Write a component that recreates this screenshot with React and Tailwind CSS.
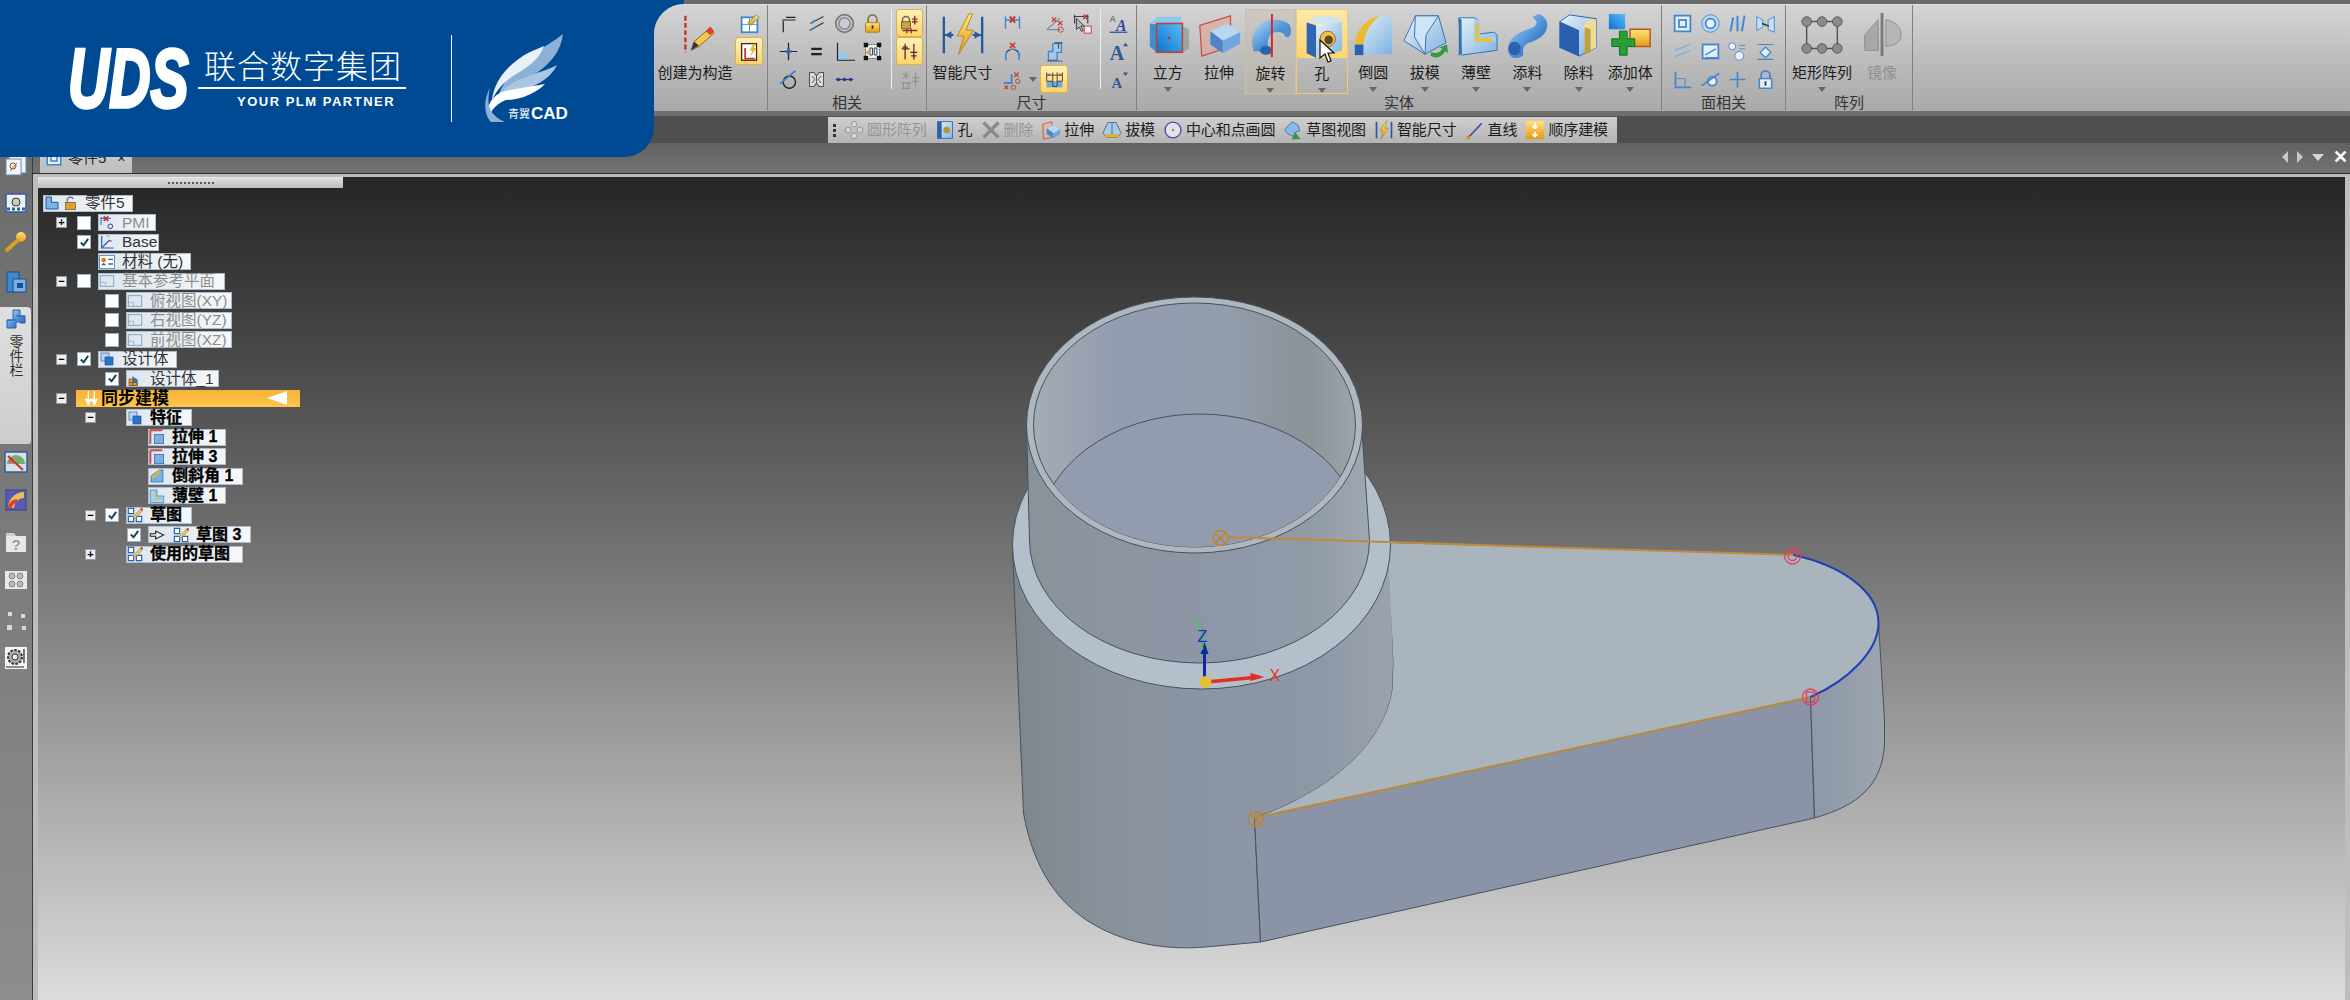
const PLATE = "M1388 543 L1794 555 C1840 565 1879 590 1879 623 C1879 650 1850 680 1811 697 L1255 818 C1330 792 1384 745 1393 690 L1394 663 Z";

function Gradients() {
  return (
    <svg className="absolute h-0 w-0">
      <defs>
        <linearGradient id="gBlue" x1="0" y1="0" x2="1" y2="1"><stop offset="0" stopColor="#bcdcf5" /><stop offset="0.55" stopColor="#4a90d8" /><stop offset="1" stopColor="#1c4fa0" /></linearGradient>
        <linearGradient id="gPale" x1="0" y1="0" x2="1" y2="1"><stop offset="0" stopColor="#e6f2fb" /><stop offset="1" stopColor="#7fb2e0" /></linearGradient>
        <linearGradient id="gCube" x1="0" y1="1" x2="1" y2="0"><stop offset="0" stopColor="#0f6fd0" /><stop offset="1" stopColor="#55c0f5" /></linearGradient>
        <linearGradient id="gGold" x1="0" y1="0" x2="0" y2="1"><stop offset="0" stopColor="#ffe27a" /><stop offset="1" stopColor="#e59a16" /></linearGradient>
        <linearGradient id="gSolid" x1="0" y1="0" x2="1" y2="0"><stop offset="0" stopColor="#7d868c" /><stop offset="0.22" stopColor="#88919a" /><stop offset="0.5" stopColor="#8b94a3" /><stop offset="0.8" stopColor="#8e97a6" /><stop offset="1" stopColor="#9aa3ad" /></linearGradient>
        <linearGradient id="gTube" x1="0" y1="0" x2="1" y2="0"><stop offset="0" stopColor="#8a9299" /><stop offset="0.3" stopColor="#8d95a2" /><stop offset="0.6" stopColor="#8e97a8" /><stop offset="0.85" stopColor="#929ca8" /><stop offset="1" stopColor="#a0a9b2" /></linearGradient>
        <linearGradient id="gInner" x1="0" y1="0" x2="1" y2="0"><stop offset="0" stopColor="#a4acb4" /><stop offset="0.25" stopColor="#939cb0" /><stop offset="0.6" stopColor="#939cac" /><stop offset="0.85" stopColor="#8a9396" /><stop offset="1" stopColor="#9ca4ac" /></linearGradient>
        <linearGradient id="gEnd" x1="0" y1="0" x2="1" y2="0"><stop offset="0" stopColor="#8d97a8" /><stop offset="1" stopColor="#9ca5ae" /></linearGradient>
      </defs>
    </svg>
  );
}

const BIG = {
  construct: <><path d="M14 4V42" stroke="#c8322a" strokeWidth="2.5" strokeDasharray="5 2.5" /><path d="M20 40l3-9 16-14 5 5-16 14z" fill="#f2c94c" stroke="#8a6a20" /><path d="M35 20l5-5 4 5-4 4z" fill="#d8403a" /><path d="M20 40l3-9 5 4z" fill="#333" /></>,
  smart: <><path d="M4 5V43M44 5V43" stroke="#2a5a9c" strokeWidth="2.5" /><path d="M4 24h10M34 24h10" stroke="#2a5a9c" strokeWidth="2" /><path d="M5 24l7-4v8zM43 24l-7-4v8z" fill="#2a5a9c" /><path d="M30 2L18 25h7l-6 20 16-26h-8l7-17z" fill="url(#gGold)" stroke="#b08a20" /></>,
  cube: <><path d="M38 14l8 4v20l-8 5H10z" fill="#7c8a8a" opacity="0.55" /><path d="M5 12l8-7h25l-1 7z" fill="#8ec8ee" /><path d="M5 12v24l7 6V13z" fill="#3f8fd0" /><rect x="12" y="12" width="27" height="30" fill="url(#gCube)" stroke="#c0403a" strokeWidth="1.6" /><circle cx="25" cy="27" r="1.5" fill="#d03030" /></>,
  extrude: <><path d="M4 14L36 4v32L6 46z" fill="#e0a090" fillOpacity="0.5" stroke="#c9503f" strokeWidth="1.3" /><path d="M15 20l18-8 13 9-18 9z" fill="#b7d8f2" /><path d="M15 20l13 10v13l-13-9z" fill="#4c86c4" /><path d="M28 30l18-9v12l-18 10z" fill="#6fa8dc" /></>,
  revolve: <><path d="M7 40C2 26 8 8 28 7c8 0 14 2 17 6l-3 12c-2-4-8-6-13-5-7 2-9 10-6 20z" fill="url(#gBlue)" /><ellipse cx="20" cy="39" rx="6.5" ry="4.5" fill="#2a62ae" /><ellipse cx="42" cy="19" rx="4" ry="6.5" fill="#4f8fd0" /><path d="M26 1V46" stroke="#d02828" strokeWidth="2" /></>,
  hole: <><path d="M8 10l11-7 27 2-11 6z" fill="#cfe4f5" /><path d="M8 10v32l10 5V13z" fill="#2f66b4" /><path d="M18 12l27-3v30l-27 8z" fill="url(#gPale)" /><circle cx="30" cy="27" r="8" fill="#f2c14a" stroke="#8a6a20" /><circle cx="31" cy="28" r="4.5" fill="#5a4a22" /></>,
  round: <><path d="M6 30C8 14 22 4 34 3c8 0 10 3 10 8v33H6z" fill="url(#gPale)" /><path d="M5 34C6 18 18 6 32 3c-8 6-16 16-18 31z" fill="#e8bb35" /><path d="M5 34h9v11H5z" fill="#2a62ae" /></>,
  draft: <><path d="M14 4h24l8 28-22 12L2 30z" fill="url(#gPale)" stroke="#3a70b0" /><path d="M14 4l-1 22 11 18 1-20 13-20z" fill="#cfe4f5" stroke="#3a70b0" /><path d="M30 42c6 2 10 0 12-4l-3-1 8-3 1 9-3-2c-3 6-9 8-15 5z" fill="#2f9a3e" /></>,
  thin: <><path d="M6 6h16l5 3v14l16-2 3 3v16l-37 5z" fill="url(#gPale)" stroke="#3a70b0" /><path d="M22 8h6v18h16v5H22z" fill="#a9cfee" /><path d="M23 12h4v15h14v4H23z" fill="#e4c043" /><path d="M6 6l3 2v35l-3 3z" fill="#3a70b0" /></>,
  add: <><path d="M4 38c0-9 8-15 16-18 7-3 14-4 14-9 0-3-3-3-4-6l6-3c6 2 10 7 9 13-1 10-11 14-19 17-4 2-7 5-6 11 1 3-3 5-8 5-5 0-8-4-8-10z" fill="url(#gBlue)" /><ellipse cx="11" cy="38" rx="6.5" ry="7" fill="#2a62ae" /></>,
  cut: <><path d="M4 10l10-7 28 4v30l-18 9-20-9z" fill="url(#gPale)" stroke="#2a62ae" /><path d="M4 10l20 9v27L4 37z" fill="#2a5eb0" /><path d="M26 14c4 4 4-5 10-7l6 1v29l-6 3V20c-4-1-7-2-10-6z" fill="#f0dc9a" /><path d="M30 16l6 2v24l-6 2z" fill="#c8a030" /></>,
  addBody: <><rect x="2" y="2" width="17" height="16" fill="url(#gCube)" /><rect x="24" y="18" width="21" height="18" fill="url(#gGold)" stroke="#b8541e" strokeWidth="1.5" /><path d="M12 25h8v-8h8v8h8v8h-8v9h-8v-9h-8z" transform="translate(-7 3)" fill="#27a038" stroke="#136a22" /></>,
  rect: <><path d="M8 10H40V38H8z" fill="none" stroke="#555" strokeWidth="1.5" />{[[8, 10], [24, 10], [40, 10], [8, 38], [24, 38], [40, 38]].map(([x, y]) => <circle key={x + "-" + y} cx={x} cy={y} r="5" fill="#8a8a8a" stroke="#555" />)}</>,
  mirror: <><path d="M6 24L20 8v32H6z" fill="#a8a8a8" stroke="#8a8a8a" /><path d="M28 8c10 2 16 8 16 16 0 6-4 10-16 12z" fill="#b6b6b6" stroke="#8f8f8f" /><path d="M24 1V46" stroke="#7a7a7a" strokeWidth="3" /></>,
};

const B = "#3f86cf";
const K = "#222";
const R = "#c8342e";
const SMALL = {
  sketchBox: <><rect x="3" y="5" width="18" height="17" fill="#fff" stroke={B} strokeWidth="2" /><path d="M3 13h18M12 5v17" stroke={B} /><path d="M10 11L20 2l3 3-9 9z" fill="url(#gGold)" stroke="#885" /></>,
  constructHL: <><rect x="3" y="3" width="17" height="19" fill="#fff" stroke="#3a2a1a" strokeWidth="1.5" /><path d="M7 8v12h11" fill="none" stroke="#c8342e" strokeWidth="2" /><path d="M16 3l-4 8h3l-2 7 7-10h-3l2-5z" fill="#e9b92d" /></>,
  corner: <><path d="M6 22V8h14M9 5h11" fill="none" stroke={K} strokeWidth="1.4" /><circle cx="6" cy="8" r="1.4" fill={B} /></>,
  parallel: <><path d="M5 12L20 4M4 20L20 11" stroke="#444" strokeWidth="1.4" /><path d="M8 10l3-2M8 18l3-2" stroke={B} strokeWidth="2" /></>,
  concentric: <><circle cx="12" cy="12" r="10" fill="none" stroke="#777" strokeWidth="2" /><circle cx="12" cy="12" r="6.5" fill="none" stroke="#8a8fa8" strokeWidth="2" /></>,
  lock: <><path d="M7 11V7a5 5 0 0 1 10 0v4" fill="none" stroke="#8a7a50" strokeWidth="2" /><rect x="4" y="11" width="16" height="11" rx="1" fill="url(#gGold)" stroke="#a07a20" /><path d="M12 14v4" stroke="#333" strokeWidth="2" /></>,
  lockHL: <><path d="M4 8a4 4 0 0 1 8 0v3H4z" fill="none" stroke="#666" strokeWidth="1.6" /><rect x="3" y="10" width="10" height="8" fill="#caa63a" stroke="#654" /><path d="M18 3v10M15 7h6M15 10h6M4 20h17M9 18v5M14 18v5" stroke="#8a2a3a" strokeWidth="1.5" /></>,
  doubleHL: <><path d="M7 3v18M17 3v18" stroke="#8a2a3a" strokeWidth="1.6" /><path d="M3 9h9M13 13h8M4 7l6 0M14 17h6" stroke="#333" strokeWidth="1.4" /></>,
  disabled: <><path d="M8 3v9M4 5l8 5M12 5l-8 5M19 4v16M15 10h8M15 14h8M3 16h10M3 22h10M5 15v8M11 15v8" stroke="#8c8c8c" strokeWidth="1.1" /></>,
  cross: <><path d="M12 2v20M2 12h20" stroke={K} strokeWidth="1.4" /><path d="M12 8v8M8 12h8" stroke="#2a5a9c" strokeWidth="2.4" /></>,
  equal: <path d="M6 9h12M6 15h12" stroke={K} strokeWidth="2.8" />,
  perp: <><path d="M4 2v20h20" fill="none" stroke={K} strokeWidth="1.4" /><path d="M5 13h9v8H5z" fill="#8ec6f0" /></>,
  select: <><rect x="4" y="4" width="16" height="16" fill="#e8eef4" stroke="#555" strokeDasharray="2 1" />{[[3, 3], [18, 3], [3, 18], [18, 18]].map(([x, y]) => <rect key={x + "-" + y} x={x - 1} y={y - 1} width="5" height="5" fill="#111" />)}<path d="M9 8h3v8H9zM14 8h3v8h-3z" fill="none" stroke="#234" /><rect x="5" y="11" width="4" height="4" fill="#d8a832" /></>,
  tangent: <><circle cx="13" cy="15" r="7" fill="none" stroke={K} strokeWidth="1.6" /><path d="M2 17L20 2" stroke={B} strokeWidth="2" /></>,
  sym: <><path d="M4 4h5l3 4v8l-3 4H4zM20 4h-5l-3 4v8l3 4h5z" fill="#d8dce4" stroke="#555" strokeWidth="1.2" /><path d="M7 8l3 4-3 4M17 8l-3 4 3 4" fill="none" stroke="#444" /></>,
  collin: <><path d="M2 12h20" stroke="#2a3a8a" strokeWidth="1.5" />{[5, 12, 19].map((x) => <circle key={x} cx={x} cy="12" r="2" fill="#2a3a8a" />)}</>,
  dimX: <><path d="M4 4v14M20 4v14M4 8h16" fill="none" stroke={B} strokeWidth="1.6" /><path d="M9 4l6 7M15 4l-6 7" stroke={R} strokeWidth="2.2" /></>,
  dimAng: <><path d="M3 19L18 6M3 19h16" stroke="#7d8cb0" strokeWidth="1.5" /><path d="M9 5l5 5M14 5l-5 5M16 9l5 5M21 9l-5 5" stroke={R} strokeWidth="1.3" /><circle cx="19" cy="19" r="3" fill="none" stroke={R} /></>,
  dimSel: <><path d="M2 4h17M3 2v10M18 2v10" stroke="#345" strokeWidth="1.3" /><path d="M13 2l4 5M17 2l-4 5" stroke={R} strokeWidth="1.6" /><path d="M5 6v13l3-3 3 5 2-1-3-5h4z" fill="#bbb" stroke="#333" /><rect x="14" y="15" width="8" height="8" fill="#eee" stroke={R} /></>,
  dimArc: <><path d="M5 22C3 16 5 12 9 10M19 22c2-6 0-10-4-12" fill="none" stroke={B} strokeWidth="1.8" /><path d="M5 12l7-3 7 3" fill="none" stroke="#345" /><path d="M9 2l6 6M15 2l-6 6" stroke={R} strokeWidth="2" /></>,
  dimDia: <><path d="M5 22V12h5V3h10v10h-5v9z" fill="#a8c8e8" stroke={B} strokeWidth="1.5" /><path d="M12 2h9M16.5 3v6" stroke="#234" /><path d="M4 23h17" stroke="#234" strokeDasharray="2 1" /></>,
  dimBase: <><path d="M2 16h9V6" fill="none" stroke={B} strokeWidth="2.2" /><path d="M14 4l5 5M19 4l-5 5M3 19l4 4M7 19l-4 4" stroke={R} strokeWidth="1.4" /><circle cx="18" cy="14" r="2.5" fill="none" stroke={R} /><circle cx="13" cy="21" r="2.5" fill="none" stroke={R} /></>,
  dimHL: <><rect x="3" y="14" width="18" height="7" fill="#6ea8dc" /><path d="M3 14V4M21 14V4M10 14V4M15 14V4M3 7h18M3 14h7v6h5v-6h6" fill="none" stroke="#444" strokeWidth="1.1" /><path d="M4 5l3 3M7 5l-3 3M17 5l3 3M20 5l-3 3" stroke={R} /></>,
  textA: <><text x="2" y="10" fontSize="10" fill="#444" fontFamily="Liberation Sans">A</text><text x="9" y="20" fontSize="18" fontWeight="700" fontStyle="italic" fill="#2a4a9c" fontFamily="Liberation Serif">A</text><path d="M2 22h20" stroke="#2a4a9c" strokeWidth="1.4" /></>,
  growA: <><text x="2" y="22" fontSize="23" fontWeight="700" fill="#2f5a96" fontFamily="Liberation Serif">A</text><path d="M17 6l3-4 3 4z" fill="#2f5a96" /></>,
  shrinkA: <><text x="4" y="22" fontSize="17" fontWeight="700" fill="#2f5a96" fontFamily="Liberation Serif">A</text><path d="M17 4h6l-3 4z" fill="#2f5a96" /></>,
  fSquare: <><rect x="3" y="3" width="18" height="18" fill="#e6eef6" stroke={B} strokeWidth="2" /><rect x="8" y="8" width="8" height="8" fill="none" stroke={B} strokeWidth="2" /></>,
  fRing: <><circle cx="12" cy="12" r="10" fill="#b8d6f0" stroke={B} /><circle cx="12" cy="12" r="5.5" fill="#e8f2fa" stroke={B} strokeWidth="2" /></>,
  fBars: <><path d="M4 21L7 5M12 3v18M20 3l-3 18" stroke={B} strokeWidth="2.2" /><path d="M8 12h2M14 12h2" stroke="#9cc4ea" strokeWidth="2" /></>,
  fPlanes: <><path d="M2 4l7 4v8l-7 4zM22 4l-7 4v11l7 3z" fill="#c8def2" stroke={B} /><path d="M8 12l8 3" stroke="#234" strokeWidth="1.6" /></>,
  fPar: <path d="M3 11l17-7M3 18l17-7" stroke="#8ab0d4" strokeWidth="2" />,
  fDist: <><rect x="3" y="4" width="18" height="16" fill="#e6eef6" stroke={B} strokeWidth="2" /><path d="M6 16l12-7M6 19h16" stroke={B} strokeWidth="1.6" /></>,
  fPts: <><circle cx="6" cy="6" r="4" fill="#eaf2fa" stroke={B} /><circle cx="14" cy="17" r="5" fill="#eaf2fa" stroke={B} /><path d="M14 5h7M14 9h7" stroke={B} /></>,
  fDia: <><path d="M3 4h18M3 21h18" stroke={B} strokeWidth="1.4" /><path d="M12 7l6 6-6 6-6-6z" fill="#e6eef6" stroke={B} strokeWidth="1.6" /></>,
  fBase: <><path d="M4 3v18h18" fill="none" stroke={B} strokeWidth="2" /><path d="M6 11h9v9" fill="none" stroke={B} /></>,
  fTan: <><circle cx="14" cy="14" r="5" fill="#eaf2fa" stroke={B} strokeWidth="2" /><path d="M2 19L22 5" stroke={B} strokeWidth="2" /></>,
  fPlus: <path d="M12 3v18M3 12h18" stroke={B} strokeWidth="1.8" />,
  fLock: <><path d="M7 11V7a5 5 0 0 1 10 0v4" fill="none" stroke={B} strokeWidth="2" /><rect x="5" y="11" width="14" height="11" fill="#e6eef6" stroke={B} strokeWidth="1.6" /><path d="M12 14v5" stroke="#234" strokeWidth="2" /></>,
  qCircPat: <><g fill="#d4d4d4" stroke="#8e8e8e"><circle cx="12" cy="5" r="3.5" /><circle cx="5" cy="12" r="3.5" /><circle cx="19" cy="12" r="3.5" /><circle cx="12" cy="19" r="3.5" /></g></>,
  qHole: <><rect x="3" y="2" width="18" height="20" fill="url(#gPale)" stroke="#2a62ae" /><rect x="3" y="2" width="5" height="20" fill="#2a62ae" /><circle cx="14" cy="12" r="4" fill="#b8942f" /></>,
  qDelete: <path d="M3 3l18 18M21 3L3 21" stroke="#8a8a8a" strokeWidth="4" />,
  qExtrude: <><path d="M2 5l11-3v19L3 23z" fill="#e4b0a0" fillOpacity="0.5" stroke="#c9503f" /><path d="M7 10l8-4 8 5-8 5z" fill="#b7d8f2" /><path d="M7 10l8 6v6l-8-5z" fill="#4c86c4" /><path d="M15 16l8-5v6l-8 5z" fill="#6fa8dc" /></>,
  qDraft: <><path d="M7 3h10l6 13-5 5H6l-5-5z" fill="#a8c8e4" stroke="#44658a" /><path d="M12 3v18" stroke="#44658a" /><path d="M4 17h16v4H4z" fill="#e0b030" /></>,
  qCircle: <><circle cx="12" cy="12" r="9.5" fill="#dfe3ee" stroke="#4a4a9a" strokeWidth="1.6" /><circle cx="12" cy="12" r="1.5" fill="#d87a1e" /></>,
  qSketch: <><path d="M5 8l6-6 7 4 2 7-6 2-1 5-8-4-3-4z" fill="#8ab8e4" stroke="#3f6fa8" /><path d="M10 23l5-8 6 8z" fill="#2f9a3e" /></>,
  qSmart: <><path d="M3 2v20M21 2v20" stroke="#2a5a9c" strokeWidth="2" /><path d="M15 1L7 13h4l-3 10 9-13h-4l3-9z" fill="url(#gGold)" stroke="#a08020" strokeWidth="0.7" /></>,
  qLine: <><path d="M4 21L20 4" stroke="#3a5a9c" strokeWidth="2" /><circle cx="4" cy="21" r="2.5" fill="#e08a20" /></>,
  qSeq: <><rect x="1" y="1" width="22" height="22" fill="url(#gGold)" /><path d="M12 4v6M12 14v6M9 7l3 3 3-3M9 17l3 3 3-3" fill="none" stroke="#fff" strokeWidth="2" /></>,
};

function Small({ name, className = "h-[24px] w-[24px]" }) {
  return <svg viewBox="0 0 24 24" className={className}>{SMALL[name]}</svg>;
}

function Cell({ name, hl }) {
  return (
    <div className={`flex h-[28px] items-center justify-center ${hl ? "rounded-[3px] border border-[#e0b040] bg-gradient-to-b from-[#fff0b4] to-[#fbd468]" : ""}`}>
      <Small name={name} className="h-[21px] w-[21px]" />
    </div>
  );
}

function Caret() {
  return <div className="mx-auto h-0 w-0 border-x-[4px] border-t-[5px] border-x-transparent border-t-[#666]" />;
}

function BigTool({ icon, label, width = "w-[51.4px]", caret, state, muted }) {
  return (
    <div className={`relative flex h-[85px] flex-col items-center pt-[3px] ${width} ${state === "hot" ? "border border-[#f0cc6c]" : ""} ${state === "soft" ? "border border-[#c9c0aa] bg-[#c5bcaa]/40" : ""}`}>
      {state === "hot" && <div className="absolute inset-x-0 top-0 h-[48px] bg-gradient-to-b from-[#fde9a8] to-[#fcd56c]" />}
      <svg viewBox="0 0 48 48" className="relative h-[46px] w-[46px] shrink-0">{BIG[icon]}</svg>
      <div className={`mt-[5px] h-[19px] whitespace-nowrap text-[15px] leading-[19px] ${muted ? "text-[#8f8f8f]" : "text-[#1c1c1c]"}`}>{label}</div>
      {caret && <div className="mt-[5px]"><Caret /></div>}
    </div>
  );
}

function Group({ label, width, children }) {
  return (
    <div className={`flex h-[107px] shrink-0 flex-col border-r border-[#808080] ${width}`}>
      <div className="flex h-[89px] pt-[4px]">{children}</div>
      <div className="h-[18px] text-center text-[15px] leading-[18px] text-[#333]">{label}</div>
    </div>
  );
}

function Ribbon() {
  const solids = [
    ["cube", "立方"], ["extrude", "拉伸"], ["revolve", "旋转", "soft"], ["hole", "孔", "hot"], ["round", "倒圆"],
    ["draft", "拔模"], ["thin", "薄壁"], ["add", "添料"], ["cut", "除料"], ["addBody", "添加体"],
  ];
  const rel = ["corner", "parallel", "concentric", "lock", "cross", "equal", "perp", "select", "tangent", "sym", "collin"];
  const face = ["fSquare", "fRing", "fBars", "fPlanes", "fPar", "fDist", "fPts", "fDia", "fBase", "fTan", "fPlus", "fLock"];
  return (
    <div className="relative h-[111px] bg-[#6a6a6a] pt-[4px]">
      <div className="absolute left-[640px] top-0 h-[36px] w-[44px] bg-[#004a94]" />
      <div className="relative ml-[654px] flex h-[107px] rounded-tl-[30px] border-t border-[#e0e0e0] bg-gradient-to-b from-[#d4d4d4] via-[#bdbdbd] to-[#a9a9a9]">
        <Group width="w-[114px]">
          <BigTool icon="construct" label="创建为构造" width="w-[82px]" />
          <div className="-ml-[1px] w-[28px]">
            <Cell name="sketchBox" />
            <Cell name="constructHL" hl />
          </div>
        </Group>
        <Group label="相关" width="w-[159px]">
          <div className="ml-[6px] grid h-[84px] w-[113px] grid-cols-4">
            {rel.map((n) => <Cell key={n} name={n} />)}
          </div>
          <div className="ml-[4px] h-[80px] w-[1px] bg-[#eeeeee]" />
          <div className="ml-[4px] w-[27px]">
            <Cell name="lockHL" hl />
            <Cell name="doubleHL" hl />
            <Cell name="disabled" />
          </div>
        </Group>
        <Group label="尺寸" width="w-[210px]">
          <BigTool icon="smart" label="智能尺寸" width="w-[71px]" />
          <div className="grid h-[84px] w-[98px] grid-cols-[28px_14px_28px_28px]">
            <Cell name="dimX" /><div /><Cell name="dimAng" /><Cell name="dimSel" />
            <Cell name="dimArc" /><div /><Cell name="dimDia" /><div />
            <Cell name="dimBase" /><div className="flex items-center"><Caret /></div><Cell name="dimHL" hl /><div />
          </div>
          <div className="ml-[4px] h-[80px] w-[1px] bg-[#eeeeee]" />
          <div className="ml-[3px] w-[28px]">
            <Cell name="textA" />
            <Cell name="growA" />
            <Cell name="shrinkA" />
          </div>
        </Group>
        <Group label="实体" width="w-[525px]">
          <div className="relative ml-[5px] flex">
            {solids.map(([icon, label, state]) => <BigTool key={icon} icon={icon} label={label} state={state} caret={icon !== "extrude"} />)}
            <svg viewBox="0 0 16 24" className="absolute left-[177px] top-[30px] h-[24px] w-[16px]">
              <path d="M1 1v18l5-4 3 8 3-1-3-8h6z" fill="#fff" stroke="#111" strokeWidth="1.2" />
            </svg>
          </div>
        </Group>
        <Group label="面相关" width="w-[124px]">
          <div className="ml-[7px] grid h-[84px] w-[110px] grid-cols-4">
            {face.map((n) => <Cell key={n} name={n} />)}
          </div>
        </Group>
        <Group label="阵列" width="w-[127px]">
          <div className="ml-[6px] flex">
            <BigTool icon="rect" label="矩形阵列" width="w-[60px]" caret />
            <BigTool icon="mirror" label="镜像" width="w-[60px]" muted />
          </div>
        </Group>
      </div>
    </div>
  );
}

function Logo() {
  return (
    <div className="absolute left-0 top-0 z-20 h-[157px] w-[654px] overflow-hidden rounded-br-[30px] bg-[#004a94] text-white">
      <div className="absolute left-[68px] top-[30px] origin-left scale-x-[0.68] text-[84px] font-bold italic leading-[96px] [-webkit-text-stroke:3.5px_white]">UDS</div>
      <div className="absolute left-[204px] top-[46px] whitespace-nowrap text-[32px] font-light leading-[42px] tracking-[1px]">联合数字集团</div>
      <div className="absolute left-[198px] top-[87px] h-[2px] w-[208px] bg-white" />
      <div className="absolute left-[237px] top-[94px] whitespace-nowrap text-[13px] font-bold leading-[16px] tracking-[1.5px]">YOUR PLM PARTNER</div>
      <div className="absolute left-[451px] top-[35px] h-[87px] w-[1px] bg-white" />
      <svg viewBox="484 33 80 90" className="absolute left-[484px] top-[33px] h-[90px] w-[80px]">
        <path d="M563 34C561 50 552 62 538 72 520 84 503 92 496 104 500 84 515 66 530 56 545 46 553 42 563 34Z" fill="#8db1d6" />
        <path d="M544 46C540 58 530 66 516 74 506 80 498 88 492 100 494 80 510 62 530 52Z" fill="#e8f0f8" />
        <path d="M557 65C552 76 540 85 522 90 508 95 498 100 491 112 494 96 506 84 524 78 538 72 548 70 557 65Z" fill="#a9c6e2" />
        <path d="M545 84C535 94 520 100 506 100 498 103 492 108 488 118 486 102 495 92 510 90Z" fill="#fff" />
        <path d="M491 122C484 115 483 100 490 88 486 105 489 115 505 122Z" fill="#8db1d6" />
      </svg>
      <div className="absolute left-[508px] top-[104px] flex items-center whitespace-nowrap leading-[20px]">
        <span className="text-[11px]">青翼</span>
        <span className="ml-[1px] text-[17px] font-bold">CAD</span>
      </div>
    </div>
  );
}

function QuickBar() {
  const items = [
    ["qCircPat", "圆形阵列", true], ["qHole", "孔"], ["qDelete", "删除", true], ["qExtrude", "拉伸"], ["qDraft", "拔模"],
    ["qCircle", "中心和点画圆"], ["qSketch", "草图视图"], ["qSmart", "智能尺寸"], ["qLine", "直线"], ["qSeq", "顺序建模"],
  ];
  return (
    <div className="h-[32px] border-t-[5px] border-[#6e6e6e] bg-[#4f4f4f] pl-[828px] pt-[1px]">
      <div className="flex h-[26px] w-[789px] items-center gap-[8px] bg-gradient-to-b from-[#cfcfcf] to-[#b4b4b4] pl-[5px] text-[15px] tracking-[-0.1px] text-[#1c1c1c]">
        <div className="flex flex-col gap-[2px]">
          <div className="h-[3px] w-[3px] bg-[#333]" /><div className="h-[3px] w-[3px] bg-[#333]" /><div className="h-[3px] w-[3px] bg-[#333]" />
        </div>
        {items.map(([icon, label, off]) => (
          <div key={icon} className={`flex items-center gap-[3px] whitespace-nowrap ${off ? "text-[#969696]" : ""}`}>
            <Small name={icon} className="h-[20px] w-[20px]" />
            {label}
          </div>
        ))}
      </div>
    </div>
  );
}

const SIDE = {
  play: <><rect x="2" y="3" width="20" height="18" fill="#eef2f6" stroke="#2f5f9c" strokeWidth="1.5" /><circle cx="12" cy="11" r="4" fill="#ccc" stroke="#333" /><path d="M3 18h18" stroke="#2f5f9c" strokeWidth="3" strokeDasharray="3 2" /></>,
  key: <><circle cx="17" cy="7" r="5" fill="url(#gGold)" /><path d="M13 11L3 20" stroke="#d8a020" strokeWidth="4" strokeLinecap="round" /></>,
  docs: <><rect x="3" y="2" width="12" height="20" fill="#3f88d0" stroke="#1c4f90" /><rect x="9" y="9" width="13" height="13" fill="#7ab0e0" stroke="#1c4f90" /><rect x="13" y="13" width="6" height="5" fill="#1c4f90" /></>,
  blocks: <><path d="M9 2h7v6h5v7h-5v-1h-4v6H3v-8h6z" fill="url(#gBlue)" stroke="#2a62ae" /><path d="M3 12h9M12 8h9" stroke="#2a62ae" /></>,
  gauge: <><rect x="1" y="2" width="22" height="20" fill="#d8e0e8" stroke="#2f5f9c" strokeWidth="1.5" /><path d="M3 14a9 9 0 0 1 18 0z" fill="#6fb06f" /><path d="M5 8h4v5H5z" fill="#d86060" /><path d="M4 6l15 14" stroke="#d03030" strokeWidth="2" /></>,
  heat: <><rect x="2" y="2" width="20" height="20" fill="#5a58b8" stroke="#2a4f80" /><path d="M4 20a16 16 0 0 1 16-16v6a10 10 0 0 0-10 10z" fill="#e8c050" /><path d="M4 20a9 9 0 0 1 9-9v4a5 5 0 0 0-5 5z" fill="#e04030" /></>,
  help: <><path d="M2 6h20v16H2z" fill="#e8e8e8" /><path d="M2 3h8l2 3H2z" fill="#cfcfcf" /><text x="12" y="20" textAnchor="middle" fontSize="15" fontWeight="700" fill="#9a9a9a" fontFamily="Liberation Sans">?</text></>,
  pattern: <><rect x="1" y="3" width="22" height="18" fill="#e8e8e8" />{[[8, 8], [16, 8], [8, 16], [16, 16]].map(([x, y]) => <circle key={x + "-" + y} cx={x} cy={y} r="3" fill="#b8b8b8" stroke="#888" />)}</>,
  nodes: <>{[[4, 4, 4], [17, 6, 4], [3, 17, 5], [18, 18, 4]].map(([x, y, s]) => <rect key={x + "-" + y} x={x} y={y} width={s} height={s} fill="#d8d8d8" />)}<path d="M6 8v9M8 19h10" stroke="#8a8a8a" /></>,
  gear: <><rect x="1" y="1" width="22" height="22" fill="#f4f4f4" /><circle cx="11" cy="11" r="7" fill="#aaa" stroke="#333" strokeWidth="2" strokeDasharray="2.5 1.5" /><circle cx="11" cy="11" r="3" fill="#eee" stroke="#333" /><path d="M20 3v14M2 21h18" stroke="#222" strokeWidth="1.2" /></>,
  first: <><rect x="5" y="2" width="17" height="18" fill="#eef2f6" stroke="#6a8ab0" /><rect x="2" y="6" width="15" height="16" fill="#f4f6fa" stroke="#6a8ab0" /><circle cx="9" cy="13" r="3" fill="none" stroke="#c8342e" /><path d="M6 18l7-8" stroke="#2f9a3e" /></>,
};

function SideIcon({ name, margin }) {
  return <svg viewBox="0 0 24 24" className={`h-[24px] w-[24px] shrink-0 ${margin}`}>{SIDE[name]}</svg>;
}

function Sidebar() {
  return (
    <div className="flex h-[857px] w-[33px] shrink-0 flex-col items-center border-r border-[#3c3c3c] bg-gradient-to-b from-[#6c6c6c] to-[#8d8d8d] pt-[10px]">
      <SideIcon name="first" />
      <SideIcon name="play" margin="mt-[14px]" />
      <SideIcon name="key" margin="mt-[15px]" />
      <SideIcon name="docs" margin="mt-[16px]" />
      <div className="mt-[13px] flex h-[137px] w-[31px] shrink-0 flex-col items-center self-start rounded-tr-[4px] rounded-br-[3px] bg-gradient-to-b from-[#e0e0e0] to-[#cdcdcd] pt-[1px]">
        <SideIcon name="blocks" />
        <div className="mt-[3px] text-[14px] leading-[14px] text-[#333] [writing-mode:vertical-rl]">零件栏</div>
      </div>
      <SideIcon name="gauge" margin="mt-[6px]" />
      <SideIcon name="heat" margin="mt-[14px]" />
      <SideIcon name="help" margin="mt-[18px]" />
      <SideIcon name="pattern" margin="mt-[14px]" />
      <SideIcon name="nodes" margin="mt-[16px]" />
      <SideIcon name="gear" margin="mt-[14px]" />
    </div>
  );
}

function TabStrip() {
  return (
    <div className="flex h-[31px] items-end border-b border-[#2e2e2e] bg-gradient-to-b from-[#626262] to-[#727272] pl-[7px]">
      <div className="flex h-[30px] w-[92px] items-center gap-[5px] rounded-t-[3px] bg-gradient-to-b from-[#d0d0d0] to-[#bdbdbd] pl-[5px] text-[15px] text-[#222]">
        <Small name="fSquare" className="h-[18px] w-[18px]" />
        零件5
        <span className="ml-[6px] text-[14px]">×</span>
      </div>
      <div className="mb-[9px] ml-auto mr-[2px] flex items-center gap-[9px]">
        <div className="h-0 w-0 border-y-[6px] border-r-[6px] border-y-transparent border-r-[#c8c8c8]" />
        <div className="h-0 w-0 border-y-[6px] border-l-[6px] border-y-transparent border-l-[#c8c8c8]" />
        <div className="h-0 w-0 border-x-[6px] border-t-[7px] border-x-transparent border-t-[#d8d8d8]" />
        <span className="text-[18px] font-bold leading-[14px] text-white">✕</span>
      </div>
    </div>
  );
}

const TREE = [
  { pad: "pl-[5px]", chip: "w-[90px]", icons: ["tPart", "tLock"], text: "零件5", tone: "normal" },
  { pad: "pl-[18px]", exp: "+", expGap: "mr-[10px]", check: false, chipGap: "ml-[7px]", chip: "w-[58px]", icons: ["tPmi"], text: "PMI", tone: "dim" },
  { pad: "pl-[39px]", check: true, chipGap: "ml-[7px]", chip: "w-[61px]", icons: ["tBase"], text: "Base", tone: "normal" },
  { pad: "pl-[60px]", chip: "w-[93px]", icons: ["tMat"], text: "材料 (无)", tone: "normal" },
  { pad: "pl-[18px]", exp: "-", expGap: "mr-[10px]", check: false, chipGap: "ml-[7px]", chip: "w-[127px]", icons: ["tPlane"], text: "基本参考平面", tone: "dim" },
  { pad: "pl-[67px]", check: false, chipGap: "ml-[7px]", chip: "w-[106px]", icons: ["tPlane"], text: "俯视图(XY)", tone: "dim" },
  { pad: "pl-[67px]", check: false, chipGap: "ml-[7px]", chip: "w-[106px]", icons: ["tPlane"], text: "右视图(YZ)", tone: "dim" },
  { pad: "pl-[67px]", check: false, chipGap: "ml-[7px]", chip: "w-[106px]", icons: ["tPlane"], text: "前视图(XZ)", tone: "dim" },
  { pad: "pl-[18px]", exp: "-", expGap: "mr-[10px]", check: true, chipGap: "ml-[7px]", chip: "w-[79px]", icons: ["tBody"], text: "设计体", tone: "normal" },
  { pad: "pl-[67px]", check: true, chipGap: "ml-[7px]", chip: "w-[93px]", icons: ["tBody2"], text: "设计体_1", tone: "normal" },
  { pad: "pl-[18px]", exp: "-", expGap: "mr-[9px]", sync: true },
  { pad: "pl-[47px]", exp: "-", expGap: "mr-[30px]", chip: "w-[66px]", icons: ["tBody"], text: "特征", tone: "bold" },
  { pad: "pl-[110px]", chip: "w-[78px]", icons: ["tExt"], text: "拉伸 1", tone: "bold" },
  { pad: "pl-[110px]", chip: "w-[78px]", icons: ["tExt"], text: "拉伸 3", tone: "bold" },
  { pad: "pl-[110px]", chip: "w-[95px]", icons: ["tCham"], text: "倒斜角 1", tone: "bold" },
  { pad: "pl-[110px]", chip: "w-[78px]", icons: ["tThin"], text: "薄壁 1", tone: "bold" },
  { pad: "pl-[47px]", exp: "-", expGap: "mr-[9px]", check: true, chipGap: "ml-[7px]", chip: "w-[66px]", icons: ["tSketch"], text: "草图", tone: "bold" },
  { pad: "pl-[89px]", check: true, chipGap: "ml-[7px]", chip: "w-[103px]", icons: ["tEye", "tSketch"], text: "草图 3", tone: "bold" },
  { pad: "pl-[47px]", exp: "+", expGap: "mr-[30px]", chip: "w-[117px]", icons: ["tSketch"], text: "使用的草图", tone: "bold" },
];

const TREE_ICONS = {
  tPart: <path d="M3 3h8v8h10v10H3z" fill="#7ab4e6" stroke="#1c5a9c" strokeWidth="1.5" />,
  tLock: <><path d="M8 11V6a5 5 0 0 1 9 0" fill="none" stroke="#777" strokeWidth="2" /><rect x="5" y="11" width="15" height="11" fill="#e0a030" stroke="#7a4a14" /></>,
  tPmi: <><path d="M3 3v12M3 5h15" stroke="#2a62ae" strokeWidth="1.5" /><path d="M7 2l7 7M14 2L7 9" stroke="#d02828" strokeWidth="2.5" /><circle cx="17" cy="17" r="3.5" fill="none" stroke="#2a3a9c" strokeWidth="1.5" /></>,
  tBase: <><path d="M4 3v18h18M4 21L16 9" fill="none" stroke="#2a62ae" strokeWidth="1.8" /><path d="M12 2l3 3M16 9l3 3M19 9l-3 3" stroke="#c8342e" /></>,
  tMat: <><rect x="1" y="2" width="22" height="20" fill="#fff" stroke="#2a62ae" /><circle cx="7" cy="9" r="3.5" fill="#e07a20" /><path d="M3 17l4-4 4 4z" fill="#2a62ae" /><path d="M14 8h7M14 15h7" stroke="#2a62ae" strokeWidth="2" /></>,
  tPlane: <><rect x="2" y="4" width="20" height="16" fill="none" stroke="#8aa4bf" strokeWidth="1.5" /><path d="M2 14h8v6" fill="none" stroke="#8aa4bf" /></>,
  tBody: <><rect x="3" y="3" width="12" height="12" fill="#bcd4ee" stroke="#2a62ae" /><rect x="9" y="9" width="12" height="12" fill="#2a72c8" stroke="#1c4f90" /></>,
  tBody2: <><path d="M8 8l8 5v9H8z" fill="#2a72c8" /><rect x="3" y="12" width="6" height="5" fill="#e09a30" stroke="#7a4a14" /><rect x="3" y="17" width="6" height="5" fill="#e09a30" stroke="#7a4a14" /><rect x="9" y="17" width="6" height="5" fill="#e09a30" stroke="#7a4a14" /></>,
  tExt: <><path d="M2 2h18M2 2v20" stroke="#c8504a" strokeWidth="3" /><rect x="8" y="8" width="14" height="14" fill="#7ab0e0" stroke="#2a62ae" /></>,
  tCham: <><path d="M3 21V12L15 3h6v18z" fill="#7ab0e0" stroke="#2a62ae" /><path d="M3 13L15 3l3 3L6 16z" fill="#d8b640" /></>,
  tThin: <><path d="M2 3h10v9h10v10H2z" fill="#a8d0f0" stroke="#2a72c8" /><path d="M10 5v11h10" fill="none" stroke="#d8b640" strokeWidth="2" /></>,
  tSketch: <><path d="M2 2h8v8H2zM2 14h8v8H2zM14 14h8v8h-8z" fill="#fff" stroke="#2a62ae" strokeWidth="1.8" /><path d="M9 15L20 3l3 3-11 11z" fill="#f2c94c" stroke="#885" /><path d="M20 3l3 3 1-3-2-2z" fill="#d03030" /></>,
  tEye: <path d="M2 10h8V6l12 6-12 6v-4H2z" fill="#eee" stroke="#222" strokeWidth="1.6" />,
};

function TreeRow({ row }) {
  return (
    <div className={`flex h-[19.5px] items-center ${row.pad}`}>
      {row.exp && (
        <div className={`flex h-[11px] w-[11px] shrink-0 items-center justify-center border border-[#8e9aa8] bg-[#eeeeee] text-[11px] font-bold leading-[9px] text-black ${row.expGap}`}>
          {row.exp === "-" ? "−" : "+"}
        </div>
      )}
      {row.check !== undefined && (
        <div className="flex h-[14px] w-[14px] shrink-0 items-center justify-center border border-[#9fb2c4] bg-white">
          {row.check && (
            <svg viewBox="0 0 12 12" className="h-[11px] w-[11px]"><path d="M2 6l3 3 5-7" fill="none" stroke="#17465f" strokeWidth="2.2" /></svg>
          )}
        </div>
      )}
      {row.sync ? (
        <div className="flex h-[17px] w-[224px] items-center bg-gradient-to-b from-[#f5b238] to-[#ffc648] text-[17px] font-bold leading-[17px] text-black">
          <svg viewBox="0 0 24 24" className="ml-[7px] h-[16px] w-[16px] shrink-0"><path d="M8 2v14M17 2v14M4 14l4 8 4-8zM13 14l4 8 4-8z" fill="#fff" stroke="#fff" strokeWidth="2" /></svg>
          <span className="ml-[2px]">同步建模</span>
          <svg viewBox="0 0 20 14" className="ml-auto mr-[13px] h-[14px] w-[20px]"><path d="M0 7L20 0v14z" fill="#fff" /></svg>
        </div>
      ) : (
        <div className={`flex h-[17px] shrink-0 items-center border border-[#aebccb] bg-gradient-to-r from-[#dce6f0] to-[#f6f7f8] ${row.chip} ${row.chipGap || ""}`}>
          {row.icons.map((ic) => (
            <svg key={ic} viewBox="0 0 24 24" className={`h-[16px] w-[16px] shrink-0 ${ic === "tLock" ? "ml-[2px]" : ""} ${ic === "tSketch" && row.icons.length > 1 ? "ml-[8px]" : ""}`}>{TREE_ICONS[ic]}</svg>
          ))}
          <span className={`ml-[7px] whitespace-nowrap leading-[16px] ${row.tone === "bold" ? "text-[16px] font-bold text-black [-webkit-text-stroke:0.3px_black]" : row.tone === "dim" ? "text-[15.5px] text-[#8d8d8d]" : "text-[15.5px] text-[#333]"}`}>{row.text}</span>
        </div>
      )}
    </div>
  );
}

function Model() {
  return (
    <svg viewBox="39 177 2306 823" className="absolute inset-0 h-full w-full">
      <defs>
        <clipPath id="innerClip"><ellipse cx="1195" cy="425" rx="161" ry="122" /></clipPath>
      </defs>
      <g stroke="#47515c" strokeWidth="1" strokeLinejoin="round">
        <path d="M1013 547L1024 813C1034 870 1060 905 1095 925 1130 945 1170 950 1206 947L1261 942 1255 818C1330 792 1384 745 1393 690L1394 663 1390 547Z" fill="url(#gSolid)" />
        <path d={PLATE} fill="#a9b4bd" stroke="none" />
        <path d="M1255 818L1811 697 1815 818 1261 942Z" fill="#8b94a6" />
        <path d="M1811 697C1850 680 1879 650 1879 623L1885 720 1885 745C1882 785 1860 805 1815 818Z" fill="url(#gEnd)" />
        <ellipse cx="1202" cy="545" rx="189" ry="144" fill="#b4bfcc" />
        <path d="M1027 425L1030 540A170 123 0 0 0 1370 540L1362 425Z" fill="url(#gTube)" />
        <ellipse cx="1195" cy="425" rx="168" ry="128" fill="#aeb7be" />
        <ellipse cx="1195" cy="425" rx="161" ry="122" fill="url(#gInner)" />
        <ellipse cx="1200" cy="536" rx="161" ry="122" fill="#939cae" clipPath="url(#innerClip)" />
      </g>
      <path d="M1228 537L1794 555" stroke="#c08a3c" strokeWidth="2" />
      <path d="M1255 818L1811 697" stroke="#b98a40" strokeWidth="2" />
      <path d="M1794 555C1840 565 1879 590 1879 623 1879 650 1850 680 1811 697" fill="none" stroke="#1f3fb8" strokeWidth="2" />
      <g fill="none" stroke="#c4812c" strokeWidth="1.5">
        <circle cx="1221" cy="538" r="7.5" /><path d="M1216 533l10 10M1226 533l-10 10" />
        <circle cx="1256" cy="819" r="7.5" /><path d="M1256 811v16M1250 814l12 10" />
      </g>
      <g fill="none" stroke="#e0405a" strokeWidth="1.3">
        <circle cx="1793" cy="556" r="8" /><circle cx="1793" cy="556" r="4.5" />
        <circle cx="1811" cy="697" r="8" /><rect x="1807" y="692" width="8" height="10" />
      </g>
      <path d="M1205 682V650" stroke="#0d2a9c" strokeWidth="3" />
      <path d="M1205 642l4 12h-8z" fill="#0d2a9c" />
      <path d="M1203 650V628" stroke="#2fc04a" strokeWidth="1.5" />
      <path d="M1207 682L1260 677" stroke="#e03020" strokeWidth="3.5" />
      <path d="M1265 677l-14-4v8z" fill="#e03020" />
      <circle cx="1206" cy="682" r="6" fill="#e0c030" />
      <text x="1198" y="642" fontSize="16" fill="#1a2fc0" fontFamily="Liberation Sans">Z</text>
      <text x="1195" y="629" fontSize="11" fill="#2fd04a" fontFamily="Liberation Sans">Y</text>
      <text x="1270" y="681" fontSize="16" fill="#f03020" fontFamily="Liberation Sans">X</text>
    </svg>
  );
}

function Viewport() {
  return (
    <div className="flex min-h-0 flex-1 border-l-[5px] border-t-[3px] border-r-[5px] border-[#bdbdbd]">
      <div className="relative flex-1 overflow-hidden bg-gradient-to-b from-[#262626] to-[#dcdcdc]">
        <Model />
        <div className="relative w-[305px]">
          <div className="flex h-[11px] items-center justify-center bg-gradient-to-b from-[#e4e4e4] to-[#bcbcbc]">
            <div className="h-[2px] w-[46px] border-t-[2px] border-dotted border-[#555]" />
          </div>
          <div className="pt-[5.5px]">
            {TREE.map((row, i) => <TreeRow key={i} row={row} />)}
          </div>
        </div>
      </div>
    </div>
  );
}

export default function App() {
  return (
    <div className="relative h-[1000px] w-[2350px] overflow-hidden bg-[#6a6a6a] font-['Liberation_Sans','Noto_Sans_CJK_SC',sans-serif]">
      <Gradients />
      <Logo />
      <Ribbon />
      <QuickBar />
      <div className="flex h-[857px]">
        <Sidebar />
        <div className="flex min-w-0 flex-1 flex-col">
          <TabStrip />
          <Viewport />
        </div>
      </div>
    </div>
  );
}
